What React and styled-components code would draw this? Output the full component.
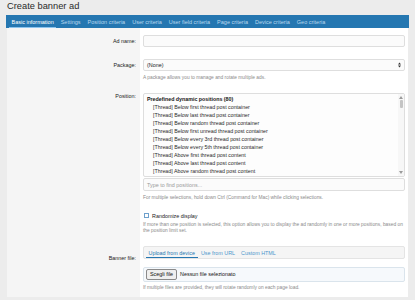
import styled, { createGlobalStyle } from 'styled-components';

const GlobalStyle = createGlobalStyle`
  * { box-sizing: border-box; }
  html, body { margin: 0; padding: 0; background: #ececec; }
  body {
    font-family: "Liberation Sans", Arial, sans-serif;
    color: #141414;
  }
`;

const Page = styled.div`
  width: 415px;
  height: 300px;
  overflow: hidden;
  padding: 0 7px;
`;

const Title = styled.h1`
  margin: 0;
  height: 15px;
  font-size: 9.3px;
  font-weight: 400;
  line-height: 12px;
  color: #2a2a2a;
`;

const TabBar = styled.nav`
  display: flex;
  gap: 2px;
  height: 13px;
  margin: 0 -1px;
  padding: 0 3px;
  background: #2577b1;
`;

const Tab = styled.span`
  display: flex;
  align-items: center;
  padding: 1.5px 2.5px 0;
  font-size: 5.5px;
  white-space: nowrap;
  color: ${p => (p.$active ? '#ffffff' : '#b9d8ef')};
  border-bottom: 1.5px solid ${p => (p.$active ? '#8cc4ee' : 'transparent')};
`;

const Panel = styled.div`
  background: #ffffff;
`;

const Row = styled.div`
  display: grid;
  grid-template-columns: 133px 1fr;
`;

const Label = styled.div`
  background: #f5f5f5;
  text-align: right;
  padding: ${p => p.$top}px 4px 0 0;
  font-size: 5.4px;
  line-height: 7px;
  color: #222;
`;

const Control = styled.div`
  padding: ${p => p.$top ?? 6}px 3px 6px;
  min-width: 0;
`;

const TextBox = styled.div`
  display: flex;
  align-items: center;
  justify-content: space-between;
  height: ${p => p.$h ?? 12}px;
  padding: 0 3px;
  background: #fbfbfb;
  border: 1px solid #dedede;
  border-radius: 2px;
  font-size: 5.4px;
  color: ${p => (p.$placeholder ? '#9a9a9a' : '#222')};
`;

const Help = styled.div`
  margin-top: ${p => p.$mt ?? 4}px;
  font-size: 4.85px;
  line-height: ${p => p.$lh ?? 6}px;
  color: #8a8a8a;
  white-space: nowrap;
`;

const ListBox = styled.div`
  display: flex;
  height: 83.5px;
  background: #fdfdfd;
  border: 1px solid #dedede;
  border-radius: 2px;
  overflow: hidden;
`;

const ListItems = styled.div`
  flex: 1;
  padding: 2px 0 0 3px;
  font-size: 5.3px;
  white-space: nowrap;
`;

const GroupHead = styled.div`
  font-weight: 700;
  line-height: 7px;
`;

const Option = styled.div`
  padding-left: 6px;
  line-height: 8px;
  color: #2a2a2a;
`;

const ScrollTrack = styled.div`
  width: 6px;
  display: flex;
  flex-direction: column;
  align-items: center;
  padding: 2px 0;
  background: #f7f7f7;
`;

const Thumb = styled.div`
  width: 3px;
  height: 8px;
  margin-top: 1px;
  background: #c4c4c4;
  border-radius: 1px;
`;

const Spacer = styled.div`
  flex: 1;
`;

const Search = styled(TextBox)`
  margin-top: 1.5px;
`;

const CheckLine = styled.label`
  display: flex;
  align-items: center;
  height: 6px;
  font-size: 5.4px;
  color: #222;
`;

const Box = styled.span`
  width: 4.5px;
  height: 4.5px;
  margin: 0 3.5px 0 1px;
  border: 0.8px solid #6ea0cc;
  background: #fff;
`;

const SubTabs = styled.div`
  display: flex;
  height: 13px;
  padding: 0 1.5px;
  background: #f5f5f5;
  border: 1px solid #e4e4e4;
  border-radius: 2px;
`;

const SubTab = styled.span`
  display: flex;
  align-items: center;
  padding: 1.5px 3px 0;
  font-size: 5.4px;
  white-space: nowrap;
  color: ${p => (p.$active ? '#2577b1' : '#4b95cc')};
  border-bottom: 1px solid ${p => (p.$active ? '#2577b1' : 'transparent')};
`;

const FileBox = styled.div`
  display: flex;
  align-items: center;
  gap: 3px;
  height: 15px;
  margin-top: 8px;
  padding: 0 2px;
  background: #f6f9fc;
  border: 1px solid #dae4ec;
  border-radius: 2px;
  font-size: 5.4px;
`;

const FileButton = styled.span`
  display: flex;
  align-items: center;
  height: 11px;
  padding: 0 3px;
  background: #efefef;
  border: 0.8px solid #8a8a8a;
  border-radius: 2px;
  color: #111;
`;

const Arrow = ({ up }) => (
  <svg width="4" height="3" viewBox="0 0 4 3">
    <path d={up ? 'M0 3 L2 0 L4 3 Z' : 'M0 0 L2 3 L4 0 Z'} fill="#9a9a9a" />
  </svg>
);

const SelectArrows = () => (
  <svg width="3" height="6" viewBox="0 0 3 6">
    <path d="M0 2.4 L1.5 0.4 L3 2.4 Z M0 3.6 L1.5 5.6 L3 3.6 Z" fill="#333" />
  </svg>
);

const tabs = [
  'Basic information',
  'Settings',
  'Position criteria',
  'User criteria',
  'User field criteria',
  'Page criteria',
  'Device criteria',
  'Geo criteria',
];

const positions = [
  '[Thread] Below first thread post container',
  '[Thread] Below last thread post container',
  '[Thread] Below random thread post container',
  '[Thread] Below first unread thread post container',
  '[Thread] Below every 3rd thread post container',
  '[Thread] Below every 5th thread post container',
  '[Thread] Above first thread post content',
  '[Thread] Above last thread post content',
  '[Thread] Above random thread post content',
  '[Thread] Above first unread thread post content',
];

export default function App() {
  return (
    <Page>
      <GlobalStyle />
      <Title>Create banner ad</Title>
      <TabBar>
        {tabs.map((t, i) => (
          <Tab key={t} $active={i === 0}>{t}</Tab>
        ))}
      </TabBar>
      <Panel>
        <Row>
          <Label $top={10}>Ad name:</Label>
          <Control $top={7}>
            <TextBox />
          </Control>
        </Row>
        <Row>
          <Label $top={9}>Package:</Label>
          <Control>
            <TextBox>
              (None)
              <SelectArrows />
            </TextBox>
            <Help>A package allows you to manage and rotate multiple ads.</Help>
          </Control>
        </Row>
        <Row>
          <Label $top={6}>Position:</Label>
          <Control>
            <ListBox>
              <ListItems>
                <GroupHead>Predefined dynamic positions (80)</GroupHead>
                {positions.map(p => (
                  <Option key={p}>{p}</Option>
                ))}
              </ListItems>
              <ScrollTrack>
                <Arrow up />
                <Thumb />
                <Spacer />
                <Arrow />
              </ScrollTrack>
            </ListBox>
            <Search $h={13} $placeholder>Type to find positions...</Search>
            <Help $mt={3.5}>
              For multiple selections, hold down Ctrl (Command for Mac) while clicking selections.
            </Help>
          </Control>
        </Row>
        <Row>
          <Label $top={6} />
          <Control>
            <CheckLine>
              <Box />
              Randomize display
            </CheckLine>
            <Help $mt={3} $lh={6.7}>
              If more than one position is selected, this option allows you to display the ad randomly in one or more positions, based on
              <br />
              the position limit set.
            </Help>
          </Control>
        </Row>
        <Row>
          <Label $top={14.5}>Banner file:</Label>
          <Control $top={5}>
            <SubTabs>
              <SubTab $active>Upload from device</SubTab>
              <SubTab>Use from URL</SubTab>
              <SubTab>Custom HTML</SubTab>
            </SubTabs>
            <FileBox>
              <FileButton>Scegli file</FileButton>
              Nessun file selezionato
            </FileBox>
            <Help $mt={3}>If multiple files are provided, they will rotate randomly on each page load.</Help>
          </Control>
        </Row>
      </Panel>
    </Page>
  );
}
